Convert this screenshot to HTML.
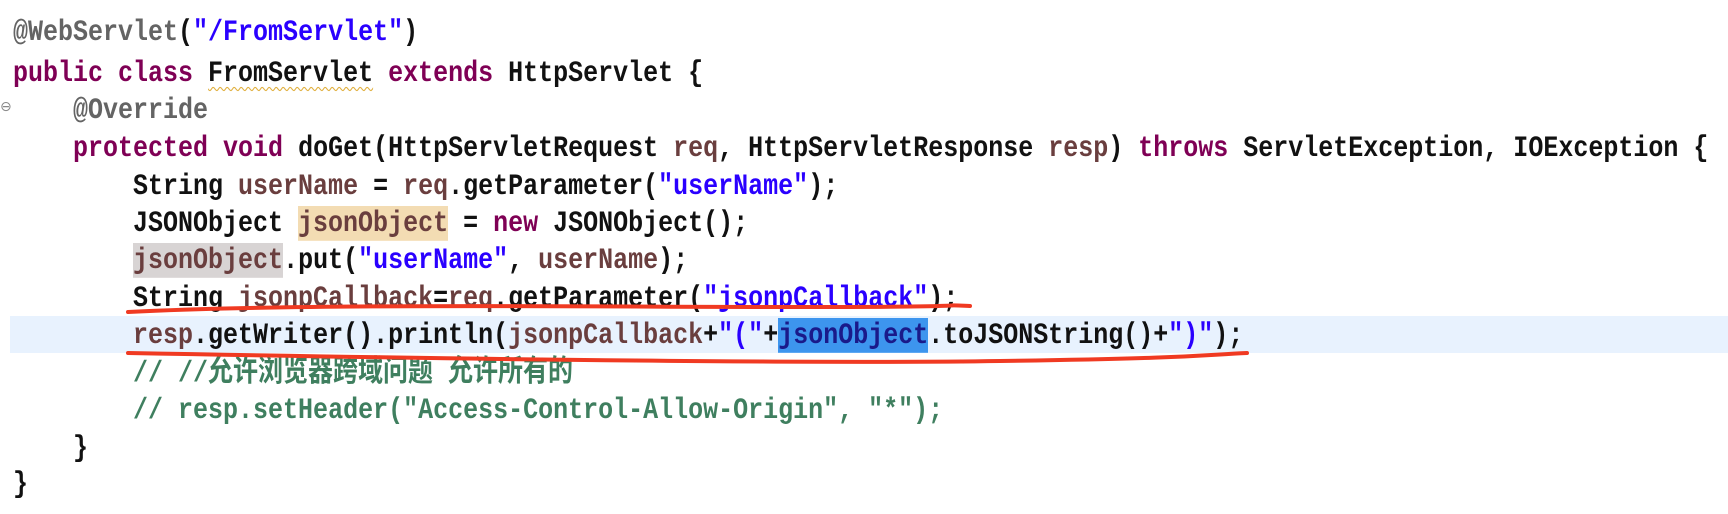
<!DOCTYPE html>
<html><head><meta charset="utf-8"><style>
html,body{margin:0;padding:0;background:#fff;width:1728px;height:514px;overflow:hidden;position:relative}
.l{position:absolute;left:13px;height:38px;line-height:38px;font-family:"Liberation Mono","Noto Sans CJK SC",monospace;font-size:25px;font-weight:bold;color:#111;white-space:pre;transform:scaleY(1.2);transform-origin:left center;letter-spacing:0}
.k{color:#7f0055}.s{color:#2a00ff}.a{color:#646464}.v{color:#6a3e3e}.c{color:#3f7f5f}
.t{background:#f3dcb3}.g{background:#d8d4d4}.sel{background:#3d95ee;color:#1a1a8a}
.cur{position:absolute;left:10px;right:0;top:316px;height:37px;background:#e8f2fe}
</style></head><body>
<div class="cur"></div>
<div class="l" style="top:14px"><span class="a">@WebServlet</span>(<span class="s">"/FromServlet"</span>)</div>
<div class="l" style="top:55px"><span class="k">public class</span> <span style="text-decoration:underline wavy #e0b040 1px;text-underline-offset:4px">FromServlet</span> <span class="k">extends</span> HttpServlet {</div>
<div style="position:absolute;left:0;top:99px;font:14px 'DejaVu Sans';color:#888">⊖</div>
<div class="l" style="top:92px">    <span class="a">@Override</span></div>
<div class="l" style="top:130px">    <span class="k">protected void</span> doGet(HttpServletRequest <span class="v">req</span>, HttpServletResponse <span class="v">resp</span>) <span class="k">throws</span> ServletException, IOException {</div>
<div class="l" style="top:168px">        String <span class="v">userName</span> = <span class="v">req</span>.getParameter(<span class="s">"userName"</span>);</div>
<div class="l" style="top:205px">        JSONObject <span class="v t">jsonObject</span> = <span class="k">new</span> JSONObject();</div>
<div class="l" style="top:242px">        <span class="v g">jsonObject</span>.put(<span class="s">"userName"</span>, <span class="v">userName</span>);</div>
<div class="l" style="top:280px">        String <span class="v">jsonpCallback</span>=<span class="v">req</span>.getParameter(<span class="s">"jsonpCallback"</span>);</div>
<div class="l" style="top:317px">        <span class="v">resp</span>.getWriter().println(<span class="v">jsonpCallback</span>+<span class="s">"("</span>+<span class="sel">jsonObject</span>.toJSONString()+<span class="s">")"</span>);</div>
<div class="l" style="top:355px">        <span class="c">// //允许浏览器跨域问题 允许所有的</span></div>
<div class="l" style="top:392px">        <span class="c">// resp.setHeader("Access-Control-Allow-Origin", "*");</span></div>
<div class="l" style="top:430px">    }</div>
<div class="l" style="top:466px">}</div>
<svg style="position:absolute;left:0;top:0" width="1728" height="514">
<path d="M128 312 C 300 303, 600 307, 800 307 S 930 304, 970 306" stroke="#f03a22" stroke-width="4" fill="none" stroke-linecap="round"/>
<path d="M128 353 C 400 358, 800 364, 1000 361 S 1200 355, 1247 353" stroke="#f03a22" stroke-width="4" fill="none" stroke-linecap="round"/>
</svg>
</body></html>
